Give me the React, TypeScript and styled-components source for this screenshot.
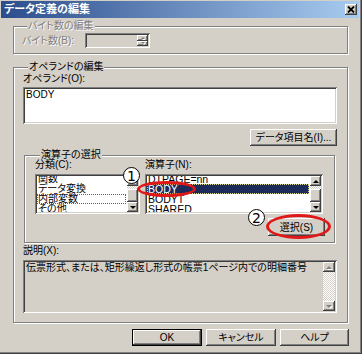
import styled, { createGlobalStyle, css } from "styled-components";

const FACE = "#d4d0c8";

const raised = css`
  box-shadow: inset -1px -1px 0 #404040, inset 1px 1px 0 #fff,
    inset -2px -2px 0 #808080, inset 2px 2px 0 ${FACE};
`;

const sunken = css`
  box-shadow: inset 1px 1px 0 #808080, inset -1px -1px 0 #fff,
    inset 2px 2px 0 #404040, inset -2px -2px 0 ${FACE};
`;

const GlobalStyle = createGlobalStyle`
  html, body { margin: 0; padding: 0; background: ${FACE}; }
  body { font-family: "Liberation Sans", "Noto Sans CJK JP", sans-serif; }
`;

const Window = styled.div`
  position: relative;
  width: 362px;
  height: 354px;
  box-sizing: border-box;
  padding: 1px 3px 4px 1px;
  background: ${FACE};
  box-shadow: inset -1px -1px 0 #404040, inset -2px -2px 0 #808080;
  display: flex;
  flex-direction: column;
  font-family: "Liberation Sans", "Noto Sans CJK JP", sans-serif;
  font-size: 10px;
  font-feature-settings: "palt";
  color: #000;
`;

const TitleBar = styled.div`
  height: 17px;
  flex: none;
  display: flex;
  align-items: center;
  justify-content: space-between;
  padding: 0 2px 0 3px;
  background: linear-gradient(to right, #2b4d8c, #a8cbf0);
`;

const TitleText = styled.span`
  color: #fff;
  font-weight: bold;
  font-size: 11px;
  line-height: 17px;
`;

const CloseButton = styled.div`
  width: 12px;
  height: 11px;
  background: ${FACE};
  ${raised};
  display: flex;
  align-items: center;
  justify-content: center;
`;

const Body = styled.div`
  flex: 1;
  display: flex;
  flex-direction: column;
  padding: 8px 10px 0 12px;
`;

// padding-top is left to the title, so the title can sit on the top edge
const GroupBox = styled.div<{ $pad: string; $mt?: number; $mx?: number }>`
  display: flex;
  flex-direction: column;
  flex: none;
  border: 1px solid #808080;
  box-shadow: inset 1px 1px 0 #fff, 1px 1px 0 #fff;
  padding: 0 ${(p) => p.$pad};
  margin: ${(p) => p.$mt ?? 0}px ${(p) => (p.$mx ?? 0) + 1}px 0 ${(p) => p.$mx ?? 0}px;
`;

const GroupTitle = styled.div<{ $disabled?: boolean; $gap: number }>`
  align-self: flex-start;
  margin: -7px 0 ${(p) => p.$gap - 5}px 5px;
  padding: 0 1px;
  height: 12px;
  line-height: 12px;
  background: ${FACE};
  color: ${(p) => (p.$disabled ? "#808080" : "#000")};
  text-shadow: ${(p) => (p.$disabled ? "1px 1px 0 #fff" : "none")};
`;

const FieldRow = styled.div`
  display: flex;
  align-items: center;
`;

const Label = styled.div<{ $disabled?: boolean; $width?: number; $mt?: number }>`
  height: 12px;
  line-height: 12px;
  white-space: nowrap;
  margin-top: ${(p) => p.$mt ?? 0}px;
  width: ${(p) => (p.$width ? `${p.$width}px` : "auto")};
  color: ${(p) => (p.$disabled ? "#808080" : "#000")};
  text-shadow: ${(p) => (p.$disabled ? "1px 1px 0 #fff" : "none")};
`;

const SpinField = styled.div`
  width: 65px;
  height: 15px;
  box-sizing: border-box;
  background: ${FACE};
  ${sunken};
  display: flex;
  justify-content: flex-end;
  padding: 2px;
`;

const SpinButtons = styled.div`
  width: 11px;
  display: flex;
  flex-direction: column;
`;

const SpinButton = styled.div`
  flex: 1;
  background: ${FACE};
  ${raised};
  display: flex;
  align-items: center;
  justify-content: center;
`;

const TextField = styled.div<{ $height: number; $disabled?: boolean; $mt: number }>`
  height: ${(p) => p.$height}px;
  margin-top: ${(p) => p.$mt}px;
  box-sizing: border-box;
  flex: none;
  background: ${(p) => (p.$disabled ? FACE : "#fff")};
  ${sunken};
  padding: 2px;
  display: flex;
`;

const FieldText = styled.div`
  flex: 1;
  padding: 0 1px;
  line-height: 12px;
  white-space: nowrap;
  overflow: hidden;
`;

const Button = styled.button<{ $width: number; $height?: number; $default?: boolean }>`
  width: ${(p) => p.$width}px;
  height: ${(p) => p.$height ?? 17}px;
  flex: none;
  box-sizing: border-box;
  padding: 0;
  margin: 0;
  font: inherit;
  color: #000;
  background: ${FACE};
  border: ${(p) => (p.$default ? "1px solid #000" : "none")};
  ${raised};
  line-height: 15px;
  white-space: nowrap;
`;

const RightButtonRow = styled.div<{ $mt: number }>`
  display: flex;
  justify-content: flex-end;
  gap: 4px;
  margin-top: ${(p) => p.$mt}px;
`;

const PickerRow = styled.div`
  display: flex;
  gap: 5px;
`;

const PickerColumn = styled.div<{ $width?: number }>`
  display: flex;
  flex-direction: column;
  ${(p) => (p.$width ? `width: ${p.$width}px;` : "flex: 1;")}
`;

const ListBox = styled.div<{ $width: number }>`
  width: ${(p) => p.$width}px;
  height: 40px;
  margin-top: 3px;
  box-sizing: border-box;
  background: #fff;
  ${sunken};
  padding: 2px;
  display: flex;
`;

const ListItems = styled.div`
  flex: 1;
  overflow: hidden;
  padding-right: 1px;
`;

// the list is scrolled by two pixels, so the first row is cut at the top
const ListScroll = styled.div`
  margin-top: -2px;
`;

const ListItem = styled.div<{ $selected?: boolean; $focus?: boolean; $latin?: boolean }>`
  height: 10px;
  line-height: 10px;
  padding-left: 1px;
  white-space: nowrap;
  font-size: ${(p) => (p.$latin ? "10.5px" : "10px")};
  background: ${(p) => (p.$selected ? "#1c2b5a" : "transparent")};
  color: ${(p) => (p.$selected ? "#fff" : "#000")};
  outline: ${(p) =>
    p.$selected ? "1px dotted #d8d890" : p.$focus ? "1px dotted #606060" : "none"};
  outline-offset: -1px;
`;

const ScrollBar = styled.div<{ $width?: number }>`
  width: ${(p) => p.$width ?? 11}px;
  flex: none;
  display: flex;
  flex-direction: column;
`;

const ScrollButton = styled.div`
  height: 10px;
  flex: none;
  background: ${FACE};
  ${raised};
  display: flex;
  align-items: center;
  justify-content: center;
`;

const Track = styled.div<{ $h?: number }>`
  ${(p) => (p.$h !== undefined ? `height: ${p.$h}px; flex: none;` : "flex: 1;")}
  background-color: #fff;
  background-image: repeating-conic-gradient(${FACE} 0 25%, #fff 0 50%);
  background-size: 2px 2px;
`;

const Thumb = styled.div<{ $h: number }>`
  height: ${(p) => p.$h}px;
  flex: none;
  background: ${FACE};
  ${raised};
`;

const Arrow = styled.span<{ $dir: "up" | "down"; $disabled?: boolean; $size?: number }>`
  width: 0;
  height: 0;
  border-left: ${(p) => p.$size ?? 3}px solid transparent;
  border-right: ${(p) => p.$size ?? 3}px solid transparent;
  ${(p) => {
    const c = p.$disabled ? "#808080" : "#000";
    const s = p.$size ?? 3;
    return p.$dir === "up" ? `border-bottom: ${s}px solid ${c};` : `border-top: ${s}px solid ${c};`;
  }}
  ${(p) => (p.$disabled ? "filter: drop-shadow(1px 1px 0 #fff);" : "")}
`;

const Badge = styled.div<{ $x: number; $y: number }>`
  position: absolute;
  left: ${(p) => p.$x}px;
  top: ${(p) => p.$y}px;
  width: 17px;
  height: 17px;
  box-sizing: border-box;
  border: 1px solid #000;
  border-radius: 50%;
  background: #fff;
  display: flex;
  align-items: center;
  justify-content: center;
  font-family: "DejaVu Sans", sans-serif;
  font-size: 14px;
  line-height: 1;
`;

const Ring = styled.div<{ $x: number; $y: number; $w: number; $h: number }>`
  position: absolute;
  left: ${(p) => p.$x}px;
  top: ${(p) => p.$y}px;
  width: ${(p) => p.$w}px;
  height: ${(p) => p.$h}px;
  box-sizing: border-box;
  border: 3px solid #e01818;
  border-radius: 50%;
`;

type ScrollSpec = { before: number; thumb: number; width?: number; disabled?: boolean };

function VScroll({ before, thumb, width, disabled }: ScrollSpec) {
  return (
    <ScrollBar $width={width}>
      <ScrollButton>
        <Arrow $dir="up" $disabled={disabled} />
      </ScrollButton>
      {thumb > 0 ? (
        <>
          <Track $h={before} />
          <Thumb $h={thumb} />
          <Track />
        </>
      ) : (
        <Track />
      )}
      <ScrollButton>
        <Arrow $dir="down" $disabled={disabled} />
      </ScrollButton>
    </ScrollBar>
  );
}

const categories = ["関数", "データ変換", "内部変数", "その他"];
const operators = ["DTPAGE=nn", "BODY", "BODYT", "SHARED"];

export default function App() {
  return (
    <>
      <GlobalStyle />
      <Window>
        <TitleBar>
          <TitleText>データ定義の編集</TitleText>
          <CloseButton>
            <svg width="8" height="7" viewBox="0 0 8 7">
              <path d="M1 0.5 L7 6.5 M7 0.5 L1 6.5" stroke="#000" strokeWidth="1.8" />
            </svg>
          </CloseButton>
        </TitleBar>
        <Body>
          <GroupBox $pad="8px 5px 8px">
            <GroupTitle $disabled $gap={6}>
              バイト数の編集
            </GroupTitle>
            <FieldRow>
              <Label $disabled $width={63}>
                バイト数(B):
              </Label>
              <SpinField>
                <SpinButtons>
                  <SpinButton>
                    <Arrow $dir="up" $disabled $size={2} />
                  </SpinButton>
                  <SpinButton>
                    <Arrow $dir="down" $disabled $size={2} />
                  </SpinButton>
                </SpinButtons>
              </SpinField>
            </FieldRow>
          </GroupBox>

          <GroupBox $pad="10px 9px 9px" $mt={13}>
            <GroupTitle $gap={5}>オペランドの編集</GroupTitle>
            <Label>オペランド(O):</Label>
            <TextField $height={37} $mt={2}>
              <FieldText>BODY</FieldText>
            </TextField>
            <RightButtonRow $mt={5}>
              <Button $width={87}>データ項目名(I)...</Button>
            </RightButtonRow>

            <GroupBox $pad="9px 6px 10px" $mt={9} $mx={1}>
              <GroupTitle $gap={3}>演算子の選択</GroupTitle>
              <PickerRow>
                <PickerColumn $width={105}>
                  <Label>分類(C):</Label>
                  <ListBox $width={105}>
                    <ListItems>
                      <ListScroll>
                        {categories.map((c, i) => (
                          <ListItem key={c} $focus={i === 2}>
                            {c}
                          </ListItem>
                        ))}
                      </ListScroll>
                    </ListItems>
                    <VScroll before={3} thumb={13} />
                  </ListBox>
                </PickerColumn>
                <PickerColumn>
                  <Label>演算子(N):</Label>
                  <ListBox $width={178}>
                    <ListItems>
                      <ListScroll>
                        {operators.map((o) => (
                          <ListItem key={o} $latin $selected={o === "BODY"}>
                            {o}
                          </ListItem>
                        ))}
                      </ListScroll>
                    </ListItems>
                    <VScroll before={3} thumb={13} />
                  </ListBox>
                  <RightButtonRow $mt={4}>
                    <Button $width={57} $height={18}>
                      選択(S)
                    </Button>
                  </RightButtonRow>
                </PickerColumn>
              </PickerRow>
            </GroupBox>

            <Label $mt={2}>説明(X):</Label>
            <TextField $height={53} $mt={3} $disabled>
              <FieldText>伝票形式、または、矩形繰返し形式の帳票1ページ内での明細番号</FieldText>
              <VScroll before={0} thumb={0} width={12} disabled />
            </TextField>
          </GroupBox>

          <RightButtonRow $mt={6}>
            <Button $width={70} $default>
              OK
            </Button>
            <Button $width={70}>キャンセル</Button>
            <Button $width={69}>ヘルプ</Button>
          </RightButtonRow>
        </Body>

        <Ring $x={137} $y={181} $w={59} $h={16} />
        <Ring $x={266} $y={214} $w={65} $h={25} />
        <Badge $x={123} $y={167}>1</Badge>
        <Badge $x={248} $y={209}>2</Badge>
      </Window>
    </>
  );
}
